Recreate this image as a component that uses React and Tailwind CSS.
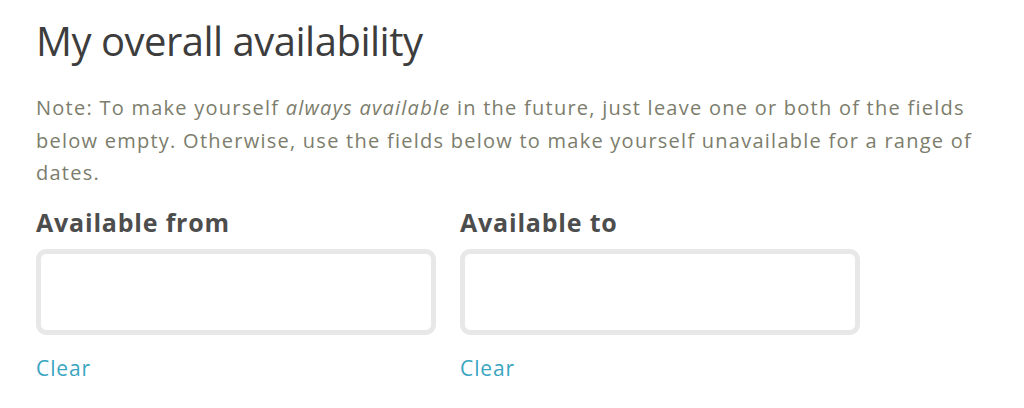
import React from 'react';

const DateField = ({ label }) => (
  <div className="w-[400px]">
    <label className="block text-[25px] font-bold leading-[30px] tracking-[0.8px] text-[#4d4d4d]">{label}</label>
    <input
      type="text"
      className="mt-[12px] box-border block h-[86px] w-[400px] rounded-[10px] border-[5px] border-[#e8e8e8] bg-white outline-none"
    />
    <a href="#" className="mt-[19px] block text-[21px] leading-[28px] tracking-[0.9px] text-[#3aa5c0]">
      Clear
    </a>
  </div>
);

export default function App() {
  return (
    <div className="h-[408px] w-[1024px] bg-white pl-[36px] pt-[15px] font-['Open_Sans',sans-serif]">
      <h2 className="text-[40px] font-normal leading-[52px] tracking-[-0.5px] text-[#3d3d3d]">My overall availability</h2>
      <p className="mt-[25px] w-[960px] text-[20px] leading-[32.5px] tracking-[1.25px] text-[#7c7d6c]">
        Note: To make yourself <em>always available</em> in the future, just leave one or both of the fields
        below empty. Otherwise, use the fields below to make yourself unavailable for a range of dates.
      </p>
      <div className="mt-[17px] flex gap-[24px]">
        <DateField label="Available from" />
        <DateField label="Available to" />
      </div>
    </div>
  );
}
